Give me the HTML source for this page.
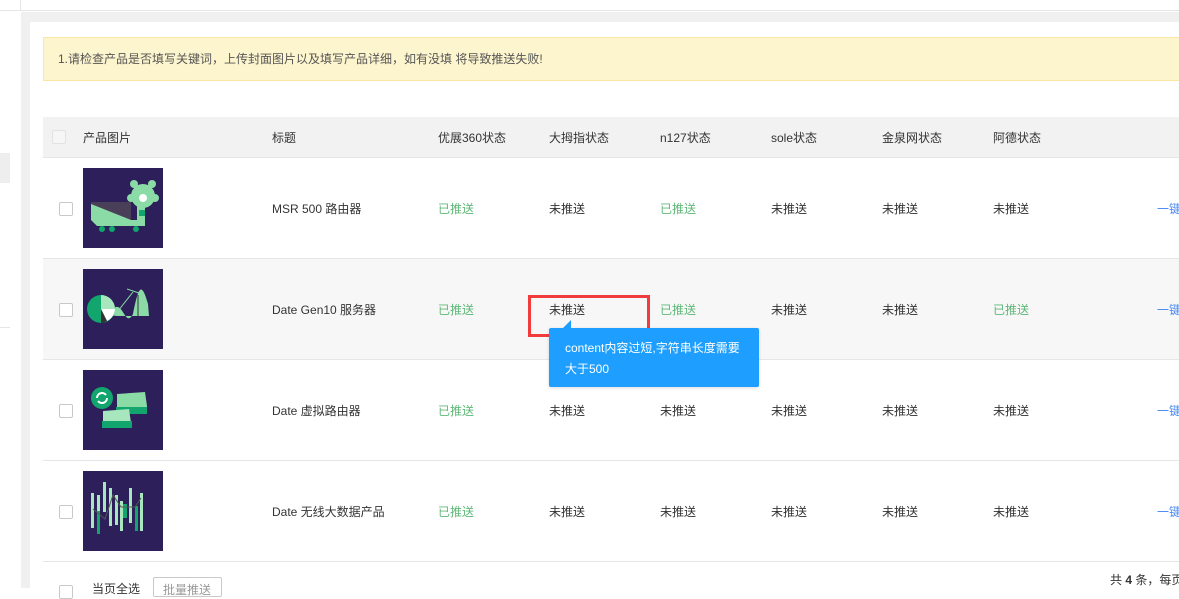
<!DOCTYPE html><html><head><meta charset="utf-8"><style>
*{margin:0;padding:0;box-sizing:border-box}
body{width:1179px;height:588px;overflow:hidden;background:#fff;font-family:"Liberation Sans","Noto Sans CJK SC",sans-serif;font-size:12px;color:#333;position:relative}
.a{position:absolute}
.cb{position:absolute;width:14px;height:14px;border:1px solid #c8c8c8;border-radius:2px;background:#fff}
.t{position:absolute;line-height:14px;white-space:nowrap}
.g{color:#5fb878}
.img{position:absolute;left:83px;width:80px;height:80px;background:#2d1f5a;overflow:hidden}
</style></head><body>
<div class="a" style="left:0;top:0;width:1179px;height:11px;background:#fff;border-bottom:1px solid #e6e6e6"></div>
<div class="a" style="left:20px;top:0;width:1px;height:11px;background:#e6e6e6"></div>
<div class="a" style="left:21px;top:12px;width:1158px;height:576px;background:#f0f0f0"></div>
<div class="a" style="left:0;top:153px;width:10px;height:30px;background:#eee"></div>
<div class="a" style="left:0;top:327px;width:10px;height:1px;background:#e6e6e6"></div>
<div class="a" style="left:30px;top:22px;width:1149px;height:566px;background:#fff"></div>
<div class="a" style="left:43px;top:37px;width:1136px;height:44px;background:#fdf5cd;border:1px solid #fbe6a2;border-right:none"></div>
<div class="t" style="left:58px;top:52px;color:#555">1.请检查产品是否填写关键词，上传封面图片以及填写产品详细，如有没填 将导致推送失败!</div>
<div class="a" style="left:43px;top:117px;width:1136px;height:41px;background:#f2f2f2;border-bottom:1px solid #e6e6e6"></div>
<div class="cb" style="left:52px;top:130px;border-color:#e2e2e2;background:#f6f6f6"></div>
<div class="t" style="left:83px;top:131px">产品图片</div>
<div class="t" style="left:272px;top:131px">标题</div>
<div class="t" style="left:438px;top:131px">优展360状态</div>
<div class="t" style="left:549px;top:131px">大拇指状态</div>
<div class="t" style="left:660px;top:131px">n127状态</div>
<div class="t" style="left:771px;top:131px">sole状态</div>
<div class="t" style="left:882px;top:131px">金泉网状态</div>
<div class="t" style="left:993px;top:131px">阿德状态</div>

<div class="a" style="left:43px;top:158px;width:1136px;height:101px;border-bottom:1px solid #e6e6e6"></div>
<div class="a" style="left:43px;top:259px;width:1136px;height:101px;background:#f7f7f7;border-bottom:1px solid #e6e6e6"></div>
<div class="a" style="left:43px;top:360px;width:1136px;height:101px;border-bottom:1px solid #e6e6e6"></div>
<div class="a" style="left:43px;top:461px;width:1136px;height:101px;border-bottom:1px solid #e6e6e6"></div>

<!-- row images -->
<div class="img" style="top:168px"><svg width="80" height="80"><circle cx="60" cy="28" r="12" fill="#8adba5"/><circle cx="51" cy="16" r="4" fill="#8adba5"/><circle cx="69" cy="16" r="4" fill="#8adba5"/><circle cx="72" cy="30" r="4" fill="#8adba5"/><circle cx="48" cy="30" r="4" fill="#8adba5"/><circle cx="60" cy="30" r="4" fill="#fff"/><polygon points="8,34 48,34 48,52 8,47" fill="#4a3f58"/><polygon points="8,36 48,52 8,52" fill="#8adba5"/><rect x="54" y="38" width="8" height="16" fill="#8adba5"/><polygon points="8,52 62,52 62,58 14,58" fill="#8adba5"/><rect x="56" y="42" width="6" height="6" fill="#12a56d"/><circle cx="19" cy="61" r="3" fill="#12a56d"/><circle cx="29" cy="61" r="3" fill="#12a56d"/><circle cx="53" cy="61" r="3" fill="#12a56d"/></svg></div>
<div class="img" style="top:269px"><svg width="80" height="80"><path d="M5,45 C10,25 20,35 30,40 C40,30 42,60 50,45 C55,20 58,10 65,35 L66,47 L35,47 Z" fill="#8adba5"/><circle cx="18" cy="40" r="14" fill="#12a56d"/><path d="M18,26 A14,14 0 0 1 32,40 L18,40Z" fill="#a8e6bd"/><path d="M18,40 L32,40 A14,14 0 0 1 24,52Z" fill="#fff"/><path d="M18,40 L24,52 A14,14 0 0 1 18,54Z" fill="#333"/><line x1="35" y1="42" x2="50" y2="23" stroke="#8adba5" stroke-width="1"/><line x1="44" y1="20" x2="56" y2="24" stroke="#8adba5"/><line x1="55" y1="26" x2="55" y2="48" stroke="#333"/></svg></div>
<div class="img" style="top:370px"><svg width="80" height="80"><circle cx="19" cy="28" r="11" fill="#12a56d"/><path d="M14,28 a5,5 0 0 1 9,-3 M24,28 a5,5 0 0 1 -9,3" stroke="#fff" stroke-width="2" fill="none"/><polygon points="34,24 62,22 64,36 64,44 34,44" fill="#8adba5"/><rect x="33" y="37" width="31" height="7" fill="#12a56d"/><polygon points="20,41 46,39 48,53 48,58 20,58" fill="#a8e6bd"/><rect x="19" y="51" width="30" height="7" fill="#12a56d"/></svg></div>
<div class="img" style="top:471px"><svg width="80" height="80"><g fill="#a8e6bd"><rect x="8" y="22" width="3" height="35"/><rect x="20" y="11" width="3" height="30"/><rect x="26" y="17" width="3" height="38"/><rect x="37" y="30" width="3" height="30"/><rect x="46" y="17" width="3" height="35"/><rect x="57" y="22" width="3" height="38"/><rect x="14" y="24" width="3" height="30"/><rect x="32" y="24" width="3" height="30"/></g><g fill="#12a56d"><rect x="14" y="40" width="3" height="23"/><rect x="40" y="33" width="4" height="14"/><rect x="52" y="35" width="3" height="25"/></g><polyline points="10,38 22,48 30,24 38,36 52,36 58,27" stroke="#555" fill="none"/></svg></div>

<div class="cb" style="left:59px;top:202px"></div>
<div class="cb" style="left:59px;top:303px"></div>
<div class="cb" style="left:59px;top:404px"></div>
<div class="cb" style="left:59px;top:505px"></div>

<div class="t" style="left:272px;top:202px">MSR 500 路由器</div>
<div class="t g" style="left:438px;top:202px">已推送</div><div class="t" style="left:549px;top:202px">未推送</div><div class="t g" style="left:660px;top:202px">已推送</div><div class="t" style="left:771px;top:202px">未推送</div><div class="t" style="left:882px;top:202px">未推送</div><div class="t" style="left:993px;top:202px">未推送</div>
<div class="t" style="left:272px;top:303px">Date Gen10 服务器</div>
<div class="t g" style="left:438px;top:303px">已推送</div><div class="t" style="left:549px;top:303px">未推送</div><div class="t g" style="left:660px;top:303px">已推送</div><div class="t" style="left:771px;top:303px">未推送</div><div class="t" style="left:882px;top:303px">未推送</div><div class="t g" style="left:993px;top:303px">已推送</div>
<div class="t" style="left:272px;top:404px">Date 虚拟路由器</div>
<div class="t g" style="left:438px;top:404px">已推送</div><div class="t" style="left:549px;top:404px">未推送</div><div class="t" style="left:660px;top:404px">未推送</div><div class="t" style="left:771px;top:404px">未推送</div><div class="t" style="left:882px;top:404px">未推送</div><div class="t" style="left:993px;top:404px">未推送</div>
<div class="t" style="left:272px;top:505px">Date 无线大数据产品</div>
<div class="t g" style="left:438px;top:505px">已推送</div><div class="t" style="left:549px;top:505px">未推送</div><div class="t" style="left:660px;top:505px">未推送</div><div class="t" style="left:771px;top:505px">未推送</div><div class="t" style="left:882px;top:505px">未推送</div><div class="t" style="left:993px;top:505px">未推送</div>
<div class="t" style="left:1157px;top:202px;color:#4c8cf5">一键</div>
<div class="t" style="left:1157px;top:303px;color:#4c8cf5">一键</div>
<div class="t" style="left:1157px;top:404px;color:#4c8cf5">一键</div>
<div class="t" style="left:1157px;top:505px;color:#4c8cf5">一键</div>

<div class="a" style="left:528px;top:295px;width:122px;height:42px;border:3px solid #f03c3c"></div>
<div class="a" style="left:549px;top:328px;width:210px;height:59px;background:#1e9fff;border-radius:2px;box-shadow:0 1px 3px rgba(0,0,0,.15)"></div>
<div class="a" style="left:563px;top:320px;width:0;height:0;border-left:8px solid transparent;border-bottom:8px solid #1e9fff"></div>
<div class="t" style="left:565px;top:341px;color:#fff">content内容过短,字符串长度需要</div>
<div class="t" style="left:565px;top:362px;color:#fff">大于500</div>

<div class="cb" style="left:59px;top:585px"></div>
<div class="t" style="left:92px;top:582px">当页全选</div>
<div class="a" style="left:153px;top:577px;width:69px;height:20px;border:1px solid #c9c9c9;border-radius:2px"></div>
<div class="t" style="left:163px;top:583px;color:#999">批量推送</div>
<div class="t" style="left:1110px;top:573px;color:#333">共 <b>4</b> 条，每页</div>
</body></html>
